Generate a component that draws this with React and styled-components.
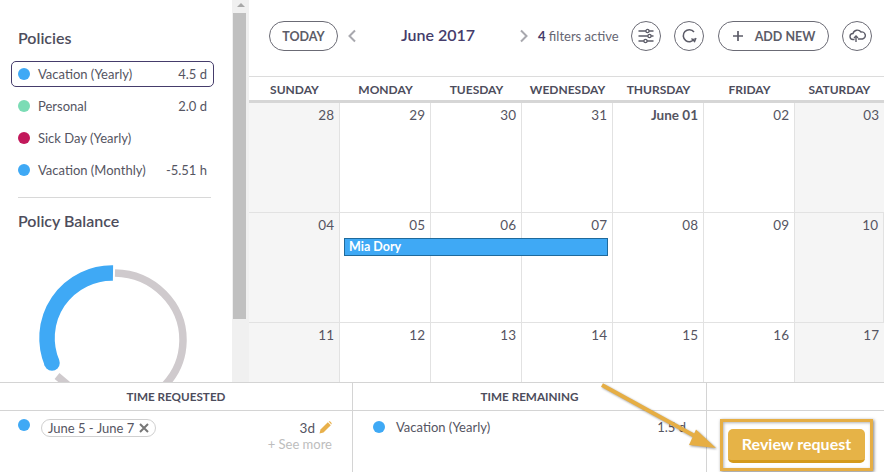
import React from 'react'
import styled, { createGlobalStyle } from 'styled-components'

const GlobalStyle = createGlobalStyle`
    html, body { margin: 0; padding: 0; background: #fff; }
    * { box-sizing: border-box; }
    body { font-family: Lato, "Open Sans", "Liberation Sans", sans-serif; color: #4d4d5c; overflow: hidden; }
`

const policies = [
    { name: 'Vacation (Yearly)', value: '4.5 d', color: '#3fa9f5', active: true },
    { name: 'Personal', value: '2.0 d', color: '#7bdcb5' },
    { name: 'Sick Day (Yearly)', value: '', color: '#c2185b' },
    { name: 'Vacation (Monthly)', value: '-5.51 h', color: '#3fa9f5' },
]

const days = ['SUNDAY', 'MONDAY', 'TUESDAY', 'WEDNESDAY', 'THURSDAY', 'FRIDAY', 'SATURDAY']

const weeks = [
    ['28', '29', '30', '31', 'June 01', '02', '03'],
    ['04', '05', '06', '07', '08', '09', '10'],
    ['11', '12', '13', '14', '15', '16', '17'],
]

function App() {
    return (
        <Page>
            <GlobalStyle />
            <Main>
                <Sidebar>
                    <SideTitle>Policies</SideTitle>
                    <PolicyList>
                        {policies.map((p) => (
                            <PolicyRow key={p.name} $active={p.active}>
                                <Dot $color={p.color} />
                                <PolicyName>{p.name}</PolicyName>
                                <span>{p.value}</span>
                            </PolicyRow>
                        ))}
                    </PolicyList>
                    <Divider />
                    <SideTitle>Policy Balance</SideTitle>
                    <Donut width="150" height="150" viewBox="0 0 150 150">
                        <path d="M78 10 A69.5 67 0 0 1 75 144" fill="none" stroke="#cfcacd" strokeWidth="7.5" />
                        <path d="M20 113 L32 123" fill="none" stroke="#cfcacd" strokeWidth="7.5" />
                        <path d="M76 10 A65 65 0 0 0 15 100" fill="none" stroke="#3fa9f5" strokeWidth="15.5" />
                        <circle cx="15" cy="100" r="7.75" fill="#3fa9f5" />
                    </Donut>
                </Sidebar>
                <Scrollbar>
                    <ScrollArrow />
                    <ScrollThumb />
                </Scrollbar>
                <Calendar>
                    <Toolbar>
                        <PillButton $width={69}>TODAY</PillButton>
                        <Chevron viewBox="0 0 10 14" $left={9}><path d="M8 1.5 L2.5 7 L8 12.5" /></Chevron>
                        <MonthTitle>June 2017</MonthTitle>
                        <Chevron viewBox="0 0 10 14"><path d="M2 1.5 L7.5 7 L2 12.5" /></Chevron>
                        <Filters><b>4</b> filters active</Filters>
                        <IconButton $left={13}>
                            <svg width="16" height="16" viewBox="0 0 16 16" fill="none" stroke="#5c5c68" strokeWidth="1.3">
                                <path d="M0.5 3 H15.5 M0.5 8 H15.5 M0.5 13 H15.5" />
                                <circle cx="9.5" cy="3" r="1.6" fill="#fff" />
                                <circle cx="11.5" cy="8" r="1.6" fill="#fff" />
                                <circle cx="7.5" cy="13" r="1.6" fill="#fff" />
                            </svg>
                        </IconButton>
                        <IconButton $left={13}>
                            <svg width="16" height="16" viewBox="0 0 16 16" fill="none" stroke="#5c5c68" strokeWidth="1.6">
                                <path d="M13 4 A6 6 0 1 0 13.6 10.5" />
                                <path d="M10.5 10.5 L13.6 13.6 L15 10" strokeWidth="1.4" />
                            </svg>
                        </IconButton>
                        <PillButton $width={111} $left={14}>
                            <svg width="12" height="12" viewBox="0 0 12 12" stroke="#5c5c68" strokeWidth="1.7">
                                <path d="M6 1 V11 M1 6 H11" />
                            </svg>
                            ADD NEW
                        </PillButton>
                        <IconButton $left={13}>
                            <svg width="17" height="14" viewBox="0 0 17 14" fill="none" stroke="#5c5c68" strokeWidth="1.4">
                                <path d="M5.5 10.5 H4 A3 3 0 0 1 4 4.5 A4.5 4.5 0 0 1 12 3 A3.5 3.5 0 0 1 13.5 10 H9" />
                                <path d="M7 13 V7" />
                                <path d="M5 9 L7 7 L9 9" />
                            </svg>
                        </IconButton>
                    </Toolbar>
                    <DaysHeader>
                        {days.map((d) => <DayName key={d}>{d}</DayName>)}
                    </DaysHeader>
                    {weeks.map((week, w) => (
                        <Week key={week[0]}>
                            {week.map((label, i) => (
                                <Cell key={label} $weekend={i === 6 || i === 0}>
                                    <CellNumber $bold={label === 'June 01'}>{label}</CellNumber>
                                </Cell>
                            ))}
                            {w === 1 && <EventBar>Mia Dory</EventBar>}
                        </Week>
                    ))}
                </Calendar>
            </Main>
            <Bottom>
                <BottomCol $width={353}>
                    <ColHeader>TIME REQUESTED</ColHeader>
                    <RequestBody>
                        <Dot $color="#3fa9f5" />
                        <Chip>
                            June 5 - June 7
                            <svg width="10" height="10" viewBox="0 0 10 10" stroke="#777" strokeWidth="2">
                                <path d="M1 1 L9 9 M9 1 L1 9" />
                            </svg>
                        </Chip>
                        <RequestRight>
                            <Amount>
                                3d
                                <svg width="13" height="13" viewBox="0 0 13 13" fill="#e8b04a">
                                    <path d="M0.5 12.5 L1.5 8.5 L8.8 1.2 L11.8 4.2 L4.5 11.5 Z" />
                                    <path d="M9.6 0.6 Q10.4 0 11.2 0.6 L12.4 1.8 Q13 2.6 12.4 3.4 Z" />
                                </svg>
                            </Amount>
                            <SeeMore>+ See more</SeeMore>
                        </RequestRight>
                    </RequestBody>
                </BottomCol>
                <BottomCol $width={354}>
                    <ColHeader>TIME REMAINING</ColHeader>
                    <RemainBody>
                        <Dot $color="#3fa9f5" />
                        <PolicyName>Vacation (Yearly)</PolicyName>
                        <span>1.5 d</span>
                    </RemainBody>
                </BottomCol>
                <BottomCol $width={177} $last>
                    <ColHeader />
                </BottomCol>
                <Highlight>
                    <ReviewButton>Review request</ReviewButton>
                </Highlight>
                <Arrow width="125" height="75" viewBox="0 0 125 75">
                    <path d="M3 2 L103 57" stroke="#e6ae44" strokeWidth="4" fill="none" />
                    <path d="M97 46.5 L117 65 L90 62 Z" fill="#e6ae44" />
                </Arrow>
            </Bottom>
        </Page>
    )
}

const Page = styled.div`
    width: 884px;
    height: 472px;
    display: flex;
    flex-direction: column;
    overflow: hidden;
`

const Main = styled.div`
    height: 382px;
    display: flex;
    overflow: hidden;
`

const Sidebar = styled.aside`
    width: 232px;
    flex-shrink: 0;
    padding-top: 28px;
    overflow: hidden;
`

const SideTitle = styled.h3`
    margin: 0 0 0 18px;
    font-size: 16px;
    line-height: 19px;
    font-weight: 600;
    color: #4d4d5c;
`

const PolicyList = styled.div`
    margin-top: 14px;
    display: flex;
    flex-direction: column;
    gap: 6px;
`

const PolicyRow = styled.div`
    margin-left: 11px;
    width: 203px;
    height: 26px;
    padding: 0 6px;
    display: flex;
    align-items: center;
    font-size: 13px;
    color: #555562;
    border: 1px solid ${(p) => (p.$active ? '#453c6b' : 'transparent')};
    border-radius: 5px;
`

const Dot = styled.span`
    width: 12px;
    height: 12px;
    flex-shrink: 0;
    border-radius: 50%;
    background: ${(p) => p.$color};
`

const PolicyName = styled.span`
    margin-left: 8px;
    flex: 1;
`

const Divider = styled.div`
    margin: 14px 21px 13px 18px;
    height: 1px;
    background: #d8d8d8;
`

const Donut = styled.svg`
    display: block;
    margin: 33px 0 0 37px;
`

const Scrollbar = styled.div`
    width: 17px;
    flex-shrink: 0;
    background: #f0f0f0;
`

const ScrollArrow = styled.div`
    margin: 3px auto 0;
    width: 0;
    height: 0;
    border-left: 4px solid transparent;
    border-right: 4px solid transparent;
    border-bottom: 4px solid #a8a8a8;
`

const ScrollThumb = styled.div`
    margin: 6px 3px 0 1px;
    height: 306px;
    background: #c0c0c0;
`

const Calendar = styled.section`
    flex: 1;
    min-width: 0;
`

const Toolbar = styled.div`
    height: 76px;
    padding: 0 0 4px 20px;
    display: flex;
    align-items: center;
`

const PillButton = styled.button`
    width: ${(p) => p.$width}px;
    height: 30px;
    margin-left: ${(p) => p.$left || 0}px;
    padding: 0;
    display: flex;
    align-items: center;
    justify-content: center;
    gap: 11px;
    flex-shrink: 0;
    font: 700 12.5px Lato, "Open Sans", sans-serif;
    color: #5c5c68;
    background: #fff;
    border: 1px solid #6b6b75;
    border-radius: 15px;
`

const Chevron = styled.svg`
    width: 10px;
    height: 14px;
    margin-left: ${(p) => p.$left || 0}px;
    flex-shrink: 0;
    fill: none;
    stroke: #a8a8ae;
    stroke-width: 2;
`

const MonthTitle = styled.h2`
    margin: 0;
    padding-bottom: 3px;
    width: 162px;
    text-align: center;
    font-size: 16px;
    font-weight: 600;
    color: #453c6b;
`

const Filters = styled.div`
    margin-left: 9px;
    width: 80px;
    flex-shrink: 0;
    white-space: nowrap;
    font-size: 13px;
    color: #666672;
    b { color: #453c6b; }
`

const IconButton = styled.button`
    width: 30px;
    height: 30px;
    margin-left: ${(p) => p.$left || 0}px;
    padding: 0;
    flex-shrink: 0;
    display: flex;
    align-items: center;
    justify-content: center;
    background: #fff;
    border: 1px solid #6b6b75;
    border-radius: 50%;
`

const DaysHeader = styled.div`
    height: 27px;
    padding-top: 2px;
    display: grid;
    grid-template-columns: repeat(6, 91px) 89px;
    align-items: center;
    border-top: 1px solid #dcdcdc;
    border-bottom: 3px solid #d6d6d6;
`

const DayName = styled.div`
    text-align: center;
    font-size: 12px;
    font-weight: 700;
    color: #4d4d5c;
`

const Week = styled.div`
    position: relative;
    height: 110px;
    display: grid;
    grid-template-columns: repeat(6, 91px) 89px;
    border-bottom: 1px solid #e2e2e2;
`

const Cell = styled.div`
    padding: 1px 5px 0 0;
    text-align: right;
    background: ${(p) => (p.$weekend ? '#f5f5f5' : '#fff')};
    border-right: 1px solid #e2e2e2;
    &:last-of-type { border-right: 0; }
`

const CellNumber = styled.span`
    font-size: 13.5px;
    font-weight: ${(p) => (p.$bold ? 700 : 400)};
    color: #555562;
`

const EventBar = styled.div`
    position: absolute;
    top: 25px;
    left: 95px;
    width: 264px;
    height: 18px;
    padding-left: 4px;
    line-height: 15px;
    font-size: 12.5px;
    font-weight: 700;
    color: #fff;
    background: #3fa9f5;
    border: 1px solid #1f6a9c;
`

const Bottom = styled.footer`
    position: relative;
    height: 90px;
    display: flex;
    background: #fff;
    border-top: 1px solid #d4d4d4;
`

const BottomCol = styled.div`
    width: ${(p) => p.$width}px;
    border-right: ${(p) => (p.$last ? '0' : '1px solid #d4d4d4')};
`

const ColHeader = styled.div`
    height: 28px;
    line-height: 26px;
    text-align: center;
    font-size: 11.7px;
    font-weight: 700;
    color: #4d4d5c;
    border-bottom: 1px solid #d4d4d4;
`

const RequestBody = styled.div`
    padding: 8px 20px 0 18px;
    display: flex;
    align-items: flex-start;
    font-size: 13.5px;
    color: #555562;
`

const Chip = styled.div`
    margin-left: 11px;
    height: 18px;
    padding: 0 6px;
    display: flex;
    align-items: center;
    gap: 5px;
    font-size: 13px;
    border: 1px solid #d0d0d0;
    border-radius: 9px;
`

const RequestRight = styled.div`
    margin-left: auto;
    display: flex;
    flex-direction: column;
    align-items: flex-end;
`

const Amount = styled.div`
    height: 17px;
    display: flex;
    align-items: center;
    gap: 4px;
`

const SeeMore = styled.div`
    font-size: 13px;
    color: #bdbdbd;
`

const RemainBody = styled.div`
    padding: 8px 20px 0 20px;
    display: flex;
    align-items: center;
    font-size: 13px;
    color: #555562;
    ${PolicyName} { margin-left: 11px; }
`

const Highlight = styled.div`
    position: absolute;
    left: 720px;
    top: 36px;
    width: 153px;
    height: 52px;
    padding: 7px 5px;
    border: 3px solid #e6ae44;
    box-shadow: 1px 1px 3px rgba(0, 0, 0, 0.5), inset 1px 1px 3px rgba(0, 0, 0, 0.3);
`

const ReviewButton = styled.button`
    display: block;
    width: 137px;
    height: 34px;
    padding: 0 0 2px;
    margin: 0;
    font: 700 16px Lato, "Open Sans", sans-serif;
    color: #fff;
    background: #e6b347;
    border: 0;
    border-bottom: 3px solid #d49a1c;
    border-radius: 5px;
`

const Arrow = styled.svg`
    position: absolute;
    left: 599px;
    top: 0;
    filter: drop-shadow(1px 1px 1px rgba(0, 0, 0, 0.4));
`

export default App
